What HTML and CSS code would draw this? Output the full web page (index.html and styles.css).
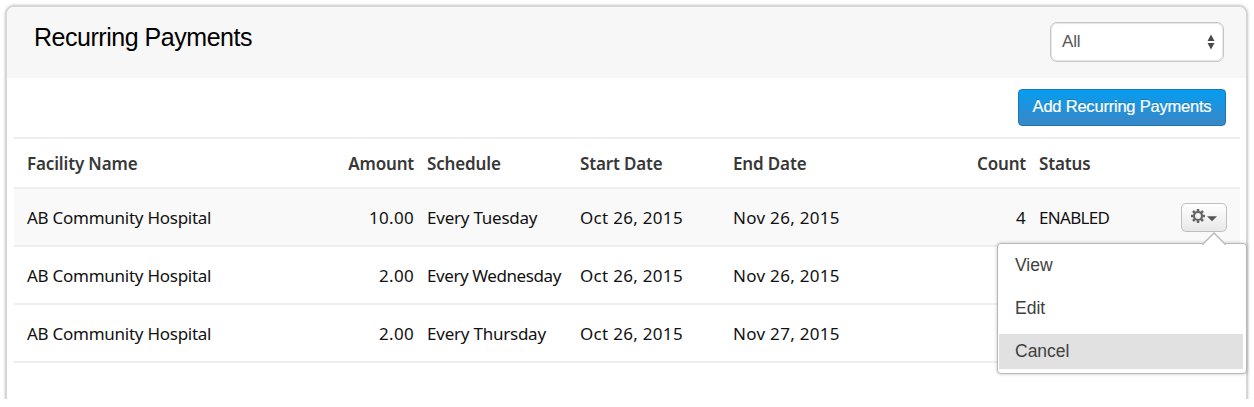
FILE: index.html
```html
<!DOCTYPE html>
<html lang="en">
<head>
<meta charset="utf-8">
<title>Recurring Payments</title>
<link rel="stylesheet" href="styles.css">
</head>
<body>
<main class="viewport">
  <section class="panel">
    <header class="panel-head">
      <h1 class="title">Recurring Payments</h1>
      <div class="select"><span>All</span>
        <svg class="select-arrows" width="8" height="16" viewBox="0 0 8 16"><path d="M4 0.5 7.5 7H.5zM4 15.5.5 9h7z" fill="#4a4a4a"/></svg>
      </div>
    </header>
    <div class="toolbar"><button class="add">Add Recurring Payments</button></div>
    <div class="table">
      <div class="row head">
        <span class="name">Facility Name</span><span class="num">Amount</span><span>Schedule</span><span>Start Date</span><span>End Date</span><span class="num">Count</span><span>Status</span>
      </div>
      <div class="row active">
        <span class="name">AB Community Hospital</span><span class="num">10.00</span><span class="sched">Every Tuesday</span><span class="date">Oct 26, 2015</span><span class="date">Nov 26, 2015</span><span class="num">4</span><span class="status">ENABLED</span>
        <div class="actions">
          <button class="gear" aria-label="Actions">
            <svg width="28" height="16" viewBox="0 0 28 16"><g transform="translate(8 7)"><circle r="4" fill="none" stroke="#666" stroke-width="2.200"/><path d="M0-4.400V-7M0 4.400V7M-4.400 0H-7M4.400 0H7M-3.200-3.200-5-5M3.200 3.200 5 5M-3.200 3.200-5 5M3.200-3.200 5-5" stroke="#666" stroke-width="2.600"/></g><path d="M17 7.200h10l-5 5z" fill="#555"/></svg>
          </button>
          <div class="menu">
            <svg class="menu-tip" width="24" height="13" viewBox="0 0 24 13"><path d="M0 13 12 1 24 13" fill="#fff" stroke="#bdbdbd" stroke-width="1.500"/></svg>
            <div class="item">View</div><div class="item">Edit</div><div class="item selected">Cancel</div>
          </div>
        </div>
      </div>
      <div class="row">
        <span class="name">AB Community Hospital</span><span class="num">2.00</span><span class="sched wide">Every Wednesday</span><span class="date">Oct 26, 2015</span><span class="date">Nov 26, 2015</span>
      </div>
      <div class="row">
        <span class="name">AB Community Hospital</span><span class="num">2.00</span><span class="sched">Every Thursday</span><span class="date">Oct 26, 2015</span><span class="date">Nov 27, 2015</span>
      </div>
    </div>
  </section>
</main>
</body>
</html>
```
FILE: styles.css
```css
* { box-sizing: border-box; }
body { margin: 0; background: #fff; font-family: "Liberation Sans", Arial, sans-serif; }
.viewport { height: 399px; padding: 5px 5px 0 5px; overflow: hidden; }
.panel { width: 1243px; height: 420px; border: 2px solid #d6d6d6; border-radius: 9px; box-shadow: 0 0 2px 1px #e6e6e6; background: #fff; }
.panel-head { display: flex; justify-content: space-between; height: 71px; padding: 15px 22px 0 27px; background: #f7f7f7; border-radius: 7px 7px 0 0; }
.title { margin: 0; font-size: 25px; font-weight: 400; line-height: 31px; letter-spacing: -0.47px; color: #000; }
.select { display: flex; align-items: center; justify-content: space-between; width: 174px; height: 40px; padding: 0 8px 0 11px; border: 1px solid #c6c6c6; border-radius: 7px; background: #fff; box-shadow: inset 0 0 1px 1px #e6e6e6; color: #555; font-size: 17px; letter-spacing: -0.2px; }
.add { width: 208px; height: 37px; padding: 0 0 2px; border: 1px solid #1778b8; border-radius: 4px; background: linear-gradient(#069df0, #3a87c6); color: #fff; font: 16.500px "Liberation Sans", Arial, sans-serif; letter-spacing: -0.21px; text-shadow: 0 -1px 0 #0003; -webkit-text-stroke: 0.2px #fff; }
.toolbar { display: flex; justify-content: flex-end; height: 59px; padding: 11px 20px 0 0; }
.table { margin: 0 6px 0 7px; }
.row { display: grid; grid-template-columns: 300px 100px 153px 153px 152px 154px 142px 58px; align-items: center; height: 58px; padding-left: 13px; border-top: 2px solid #eee; color: #111; font: 17px "Noto Sans", sans-serif; white-space: nowrap; }
.row:last-child { height: 60px; border-bottom: 2px solid #eee; }
.head { height: 50px; color: #383838; font-weight: 600; letter-spacing: -0.15px; }
.head > span { padding-top: 1px; }
.active { background: #f9f9f9; }
.row > .num { padding-right: 13px; text-align: right; letter-spacing: 0.3px; }
.head > .num { letter-spacing: -0.2px; }
.row:not(.head) .name { letter-spacing: -0.26px; }
.sched { letter-spacing: -0.23px; }
.wide { letter-spacing: -0.42px; }
.date { letter-spacing: 0.3px; }
.status { letter-spacing: -0.7px; }
.actions { position: relative; }
.gear { display: flex; align-items: center; justify-content: center; width: 46px; height: 29px; padding: 0; border: 1px solid #bfbfbf; border-radius: 5px; background: linear-gradient(#fff, #e8e8e8); }
.menu { position: absolute; z-index: 1; top: 40px; right: -8px; width: 250px; height: 131px; padding-top: 4px; border: 1px solid #b8b8b8; border-radius: 4px; background: #fff; box-shadow: 0 0 3px 1px #0002; font: 17.500px "Liberation Sans", Arial, sans-serif; color: #404040; }
.menu-tip { position: absolute; top: -12px; right: 20px; }
.item { height: 35px; margin: 0 3px 8px 1px; padding-left: 16px; line-height: 35px; }
.selected { background: #e1e1e1; }
```
